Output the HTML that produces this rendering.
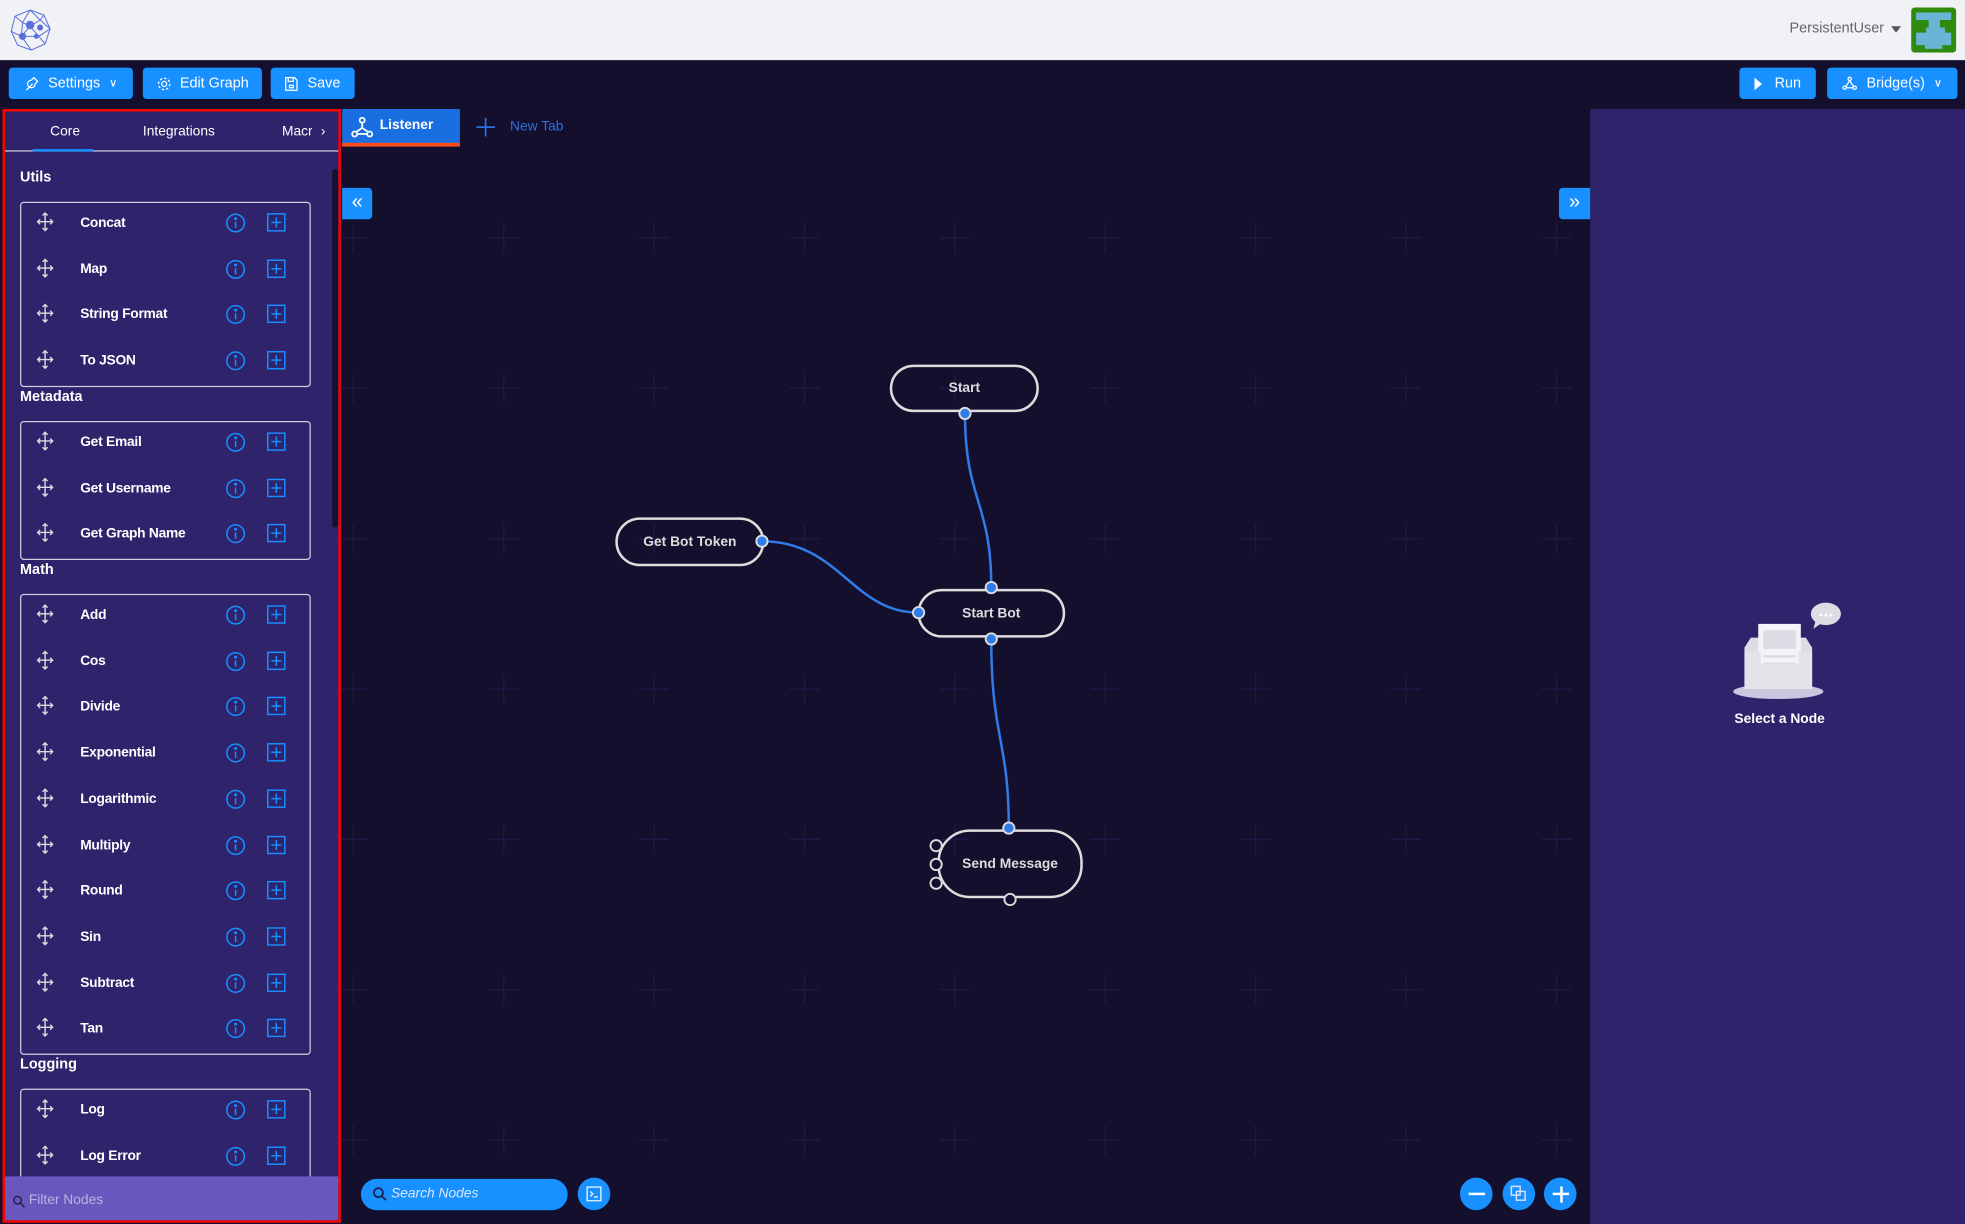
<!DOCTYPE html>
<html><head><meta charset="utf-8">
<style>
*{box-sizing:border-box;margin:0;padding:0}
html,body{width:1965px;height:1224px;overflow:hidden;background:#130f2c;font-family:"Liberation Sans",Arial,sans-serif}
#w{position:absolute;left:0;top:0;width:1568px;height:977px;transform:scale(1.25319,1.2528);transform-origin:0 0;background:#130f2c}
.a{position:absolute}
.hdr{left:0;top:0;width:1568px;height:48px;background:#f1f2f6}
.btn{position:absolute;top:54px;height:25px;background:#1890ff;border-radius:3px;color:#fff;font-size:11.5px;display:flex;align-items:center;justify-content:center;gap:7px}
.lp{left:2px;top:87px;width:270px;height:889px;background:#2f236b;border:2px solid #f00;overflow:hidden}
.tab{position:absolute;top:10px;color:#fff;font-size:11px}
.sec{position:absolute;left:12px;color:#fff;font-size:11.5px;font-weight:bold}
.box{position:absolute;left:12px;width:232px;border:1px solid #cfcfe0;border-radius:3px}
.row{position:absolute;left:0;width:232px;height:20px}
.row .t{position:absolute;left:47px;top:3px;color:#fff;font-size:11px;font-weight:bold;letter-spacing:-0.2px}
.row svg{position:absolute;top:0}
.node{position:absolute;border:2px solid #ddd;border-radius:22px;color:#ddd;font-size:11px;display:flex;align-items:center;justify-content:center;font-weight:bold}
.zb{position:absolute;top:940px;width:26px;height:26px;border-radius:50%;background:#1890ff}
</style></head><body><div id="w">
<div class="a hdr">
 <svg class="a" style="left:8px;top:7px" width="33" height="34" viewBox="0 0 33 34" fill="none" stroke="#5b6fd8" stroke-width="0.8">
  <polygon points="16,1 27,5 32,16 28,28 17,33 6,29 1,18 4,6"/>
  <path d="M16,1 L10,11 L4,6 M10,11 L16,14 L24,9 L27,5 M24,9 L32,16 M16,14 L9,22 L1,18 M9,22 L17,33 M16,14 L23,22 L28,28 M23,22 L32,16 M9,22 L23,22 M10,11 L9,22 M16,1 L24,9"/>
  <circle cx="16" cy="13" r="3" fill="#5b6fd8"/><circle cx="24" cy="15" r="2" fill="#5b6fd8"/><circle cx="10" cy="22" r="2.5" fill="#5b6fd8"/><circle cx="21" cy="22" r="1.6" fill="#5b6fd8"/>
 </svg>
 <div class="a" style="left:1428px;top:17px;color:#666;font-size:11.5px">PersistentUser</div>
 <div class="a" style="left:1509px;top:21px;width:0;height:0;border-left:4.5px solid transparent;border-right:4.5px solid transparent;border-top:5px solid #555"></div>
 <svg class="a" style="left:1525px;top:6px" width="36" height="36" viewBox="0 0 36 36"><rect width="36" height="36" rx="3" fill="#2e8b0e"/><path d="M4,4H32V10H23V16H27V20H32V30H4V20H12V16H14V10H4Z" fill="#6ab4d6"/><rect x="11" y="30" width="14" height="3" fill="#6ab4d6"/></svg>
</div>

<div class="btn" style="left:7px;width:99px"><svg width="12" height="12" viewBox="0 0 12 12" fill="none" stroke="#fff" stroke-width="1"><path d="M2,11 L7,6 M6,3 A3,3 0 1 0 9,6 L11,4 L8,1 Z"/></svg>Settings<span style="font-size:9px">&#8744;</span></div>
<div class="btn" style="left:114px;width:95px"><svg width="12" height="12" viewBox="0 0 12 12" fill="none" stroke="#fff" stroke-width="1"><circle cx="6" cy="6" r="2"/><circle cx="6" cy="6" r="4.5" stroke-dasharray="2 1.5"/></svg>Edit Graph</div>
<div class="btn" style="left:216px;width:67px"><svg width="11" height="12" viewBox="0 0 11 12" fill="none" stroke="#fff" stroke-width="1"><path d="M1,1H8L10,3V11H1Z M3,1V4H7V1 M4,7H7V9H4Z"/></svg>Save</div>
<div class="btn" style="left:1388px;width:61px"><span style="width:0;height:0;border-top:5px solid transparent;border-bottom:5px solid transparent;border-left:6px solid #fff"></span>&nbsp;Run</div>
<div class="btn" style="left:1458px;width:104px"><svg width="12" height="11" viewBox="0 0 12 11" fill="none" stroke="#fff" stroke-width="1"><circle cx="6" cy="2" r="1.3"/><circle cx="2" cy="9" r="1.3"/><circle cx="10" cy="9" r="1.3"/><path d="M6,3.3L3,8 M6,3.3L9,8 M3.3,9H8.7"/></svg>Bridge(s)<span style="font-size:9px">&#8744;</span></div>

<svg class="a" style="left:272px;top:117px" width="997" height="860">
 <g stroke="#1f1a48" stroke-width="1" fill="none">
  <path id="r" d="M0,73h22M10,61v24 M118,73h24M130,61v24 M238,73h24M250,61v24 M358,73h24M370,61v24 M478,73h24M490,61v24 M598,73h24M610,61v24 M718,73h24M730,61v24 M838,73h24M850,61v24 M958,73h24M970,61v24"/>
  <use href="#r" y="120"/><use href="#r" y="240"/><use href="#r" y="360"/><use href="#r" y="480"/><use href="#r" y="600"/><use href="#r" y="720"/>
 </g>
</svg>

<div class="a" style="left:273px;top:87px;width:94px;height:30px;background:#1a6fe0;border-bottom:3px solid #ff4a1a;color:#fff;font-size:11px;font-weight:bold">
 <svg class="a" style="left:7px;top:6px" width="18" height="17" viewBox="0 0 18 17" fill="none" stroke="#fff" stroke-width="1.4"><circle cx="9" cy="3" r="2"/><circle cx="3" cy="14" r="2"/><circle cx="15" cy="14" r="2"/><path d="M9,5V9M9,9L4,12.5M9,9L14,12.5M5,14H13"/></svg>
 <span class="a" style="left:30px;top:7px">Listener</span></div>
<svg class="a" style="left:380px;top:94px" width="15" height="15"><path d="M7.5,0V15M0,7.5H15" stroke="#2f6fe0" stroke-width="1.4"/></svg>
<div class="a" style="left:407px;top:95px;color:#2f6fe0;font-size:11px">New Tab</div>

<div class="a" style="left:273px;top:150px;width:24px;height:25px;background:#1890ff;border-radius:0 3px 3px 0;color:#fff;font-size:16px;text-align:center;line-height:24px">&#171;</div>
<div class="a" style="left:1244px;top:150px;width:25px;height:25px;background:#1890ff;border-radius:3px 0 0 3px;color:#fff;font-size:16px;text-align:center;line-height:24px">&#187;</div>

<svg class="a" style="left:0;top:0" width="1568" height="977" fill="none">
 <path d="M770,330 C770,400 791,400 791,469" stroke="#2f7be8" stroke-width="2"/>
 <path d="M608,432 C670,432 680,489 733,489" stroke="#2f7be8" stroke-width="2"/>
 <path d="M791,510 C791,590 805,590 805,661" stroke="#2f7be8" stroke-width="2"/>
</svg>
<div class="node" style="left:710px;top:291px;width:119px;height:38px">Start</div>
<div class="node" style="left:491px;top:413px;width:119px;height:39px">Get Bot Token</div>
<div class="node" style="left:732px;top:470px;width:118px;height:39px">Start Bot</div>
<div class="node" style="left:748px;top:662px;width:116px;height:55px;border-radius:26px">Send Message</div>
<svg class="a" style="left:0;top:0" width="1568" height="977" stroke="#ddd" stroke-width="1.5">
 <g fill="#2f7be8"><circle cx="770" cy="330" r="4.5"/><circle cx="608" cy="432" r="4.5"/><circle cx="791" cy="469" r="4.5"/><circle cx="733" cy="489" r="4.5"/><circle cx="791" cy="510" r="4.5"/><circle cx="805" cy="661" r="4.5"/></g>
 <g fill="#130f2c"><circle cx="747" cy="675" r="4.5"/><circle cx="747" cy="690" r="4.5"/><circle cx="747" cy="705" r="4.5"/><circle cx="806" cy="718" r="4.5"/></g>
</svg>

<div class="a" style="left:1269px;top:87px;width:299px;height:890px;background:#2f236b">
 <svg class="a" style="left:114px;top:393px" width="90" height="82" viewBox="0 0 90 82">
  <ellipse cx="36" cy="72" rx="36" ry="6" fill="#c9c6e0"/>
  <path d="M9,37 L14,29 H58 L63,37 V70 H9Z" fill="#dcdde4"/>
  <rect x="20" y="18" width="34" height="44" fill="#f4f4f6"/>
  <rect x="24" y="23" width="26" height="15" fill="#dcdde4"/>
  <rect x="24" y="43" width="26" height="2" fill="#dcdde4"/><rect x="24" y="49" width="26" height="2" fill="#dcdde4"/>
  <path d="M9,40 H22 V50 H52 V40 H63 V70 H9Z" fill="#e3e4ea"/>
  <ellipse cx="74" cy="10" rx="12" ry="9" fill="#dcdde4"/><path d="M66,15 L64,22 L71,17Z" fill="#dcdde4"/>
  <circle cx="70" cy="11" r="1.2" fill="#fff"/><circle cx="74" cy="11" r="1.2" fill="#fff"/><circle cx="78" cy="11" r="1.2" fill="#fff"/>
 </svg>
 <div class="a" style="left:115px;top:481px;color:#fff;font-size:11px;font-weight:bold">Select a Node</div>
</div>

<div class="a" style="left:288px;top:941px;width:165px;height:25px;border-radius:13px;background:#1890ff"></div>
<svg class="a" style="left:297px;top:947px" width="12" height="12" fill="none" stroke="#1a2350" stroke-width="1.4"><circle cx="5" cy="5" r="3.6"/><path d="M7.5,7.5L11,11"/></svg>
<div class="a" style="left:312px;top:947px;color:#d6e8ff;font-size:11px;font-style:italic">Search Nodes</div>
<div class="zb" style="left:461px"></div>
<svg class="a" style="left:468px;top:947px" width="12" height="12" fill="none" stroke="#fff" stroke-width="1"><rect x="0.5" y="0.5" width="11" height="11"/><path d="M3,4L5,6L3,8M6,8.5H9"/></svg>
<div class="zb" style="left:1165px"></div><div class="a" style="left:1172px;top:952px;width:13px;height:2px;background:#fff"></div>
<div class="zb" style="left:1199px"></div>
<svg class="a" style="left:1205px;top:946px" width="14" height="14" fill="none" stroke="#cfe2ff" stroke-width="1.2"><rect x="1" y="1" width="7" height="7"/><rect x="5" y="5" width="7" height="7"/></svg>
<div class="zb" style="left:1232px"></div><div class="a" style="left:1239px;top:952px;width:13px;height:2px;background:#fff"></div><div class="a" style="left:1244.5px;top:946.5px;width:2px;height:13px;background:#fff"></div>

<div class="a lp">
 <div class="tab" style="left:36px">Core</div>
 <div class="tab" style="left:110px">Integrations</div>
 <div class="tab" style="left:221px;width:24px;overflow:hidden">Macros</div>
 <div class="tab" style="left:252px">&#8250;</div>
 <div class="a" style="left:0;top:31px;width:266px;height:1px;background:#cfcfe0"></div>
 <div class="a" style="left:22px;top:30px;width:48px;height:2px;background:#1890ff"></div>
 <div class="a" style="left:261px;top:46px;width:5px;height:286px;background:#15112e;border-radius:3px"></div>
 <div id="list"></div>
 <div class="a" style="left:0;top:850px;width:266px;height:36px;background:#6a57be"></div>
 <svg class="a" style="left:6px;top:865px" width="10" height="10" fill="none" stroke="#1a2350" stroke-width="1.2"><circle cx="4" cy="4" r="3"/><path d="M6,6L9.5,9.5"/></svg>
 <div class="a" style="left:19px;top:863px;color:#bbb3e0;font-size:11px">Filter Nodes</div>
</div>
</div>
<script>
var secs=[["Utils",47,72,["Concat","Map","String Format","To JSON"]],["Metadata",222,247,["Get Email","Get Username","Get Graph Name"]],["Math",360,385,["Add","Cos","Divide","Exponential","Logarithmic","Multiply","Round","Sin","Subtract","Tan"]],["Logging",755,780,["Log","Log Error","Log Warning"]]];
var h="",R=36.7;
var mv='<svg style="left:12px" width="14" height="16" viewBox="0 0 14 16" fill="none" stroke="#ddd" stroke-width="1.1"><path d="M7,1V15M1,8H13M5,3L7,1L9,3M5,13L7,15L9,13M3,6L1,8L3,10M11,6L13,8L11,10"/></svg>';
var inf='<svg style="left:163px;top:1px" width="16" height="16" fill="none" stroke="#1890ff" stroke-width="1.2"><circle cx="8" cy="8" r="7"/><path d="M8,7V12"/><circle cx="8" cy="4.5" r="0.6" fill="#1890ff"/></svg>';
var pl='<svg style="left:196px;top:1px" width="15" height="15" fill="none" stroke="#1890ff" stroke-width="1.2"><rect x="0.7" y="0.7" width="13.6" height="13.6"/><path d="M7.5,3.5V11.5M3.5,7.5H11.5"/></svg>';
secs.forEach(function(s){
 h+='<div class="sec" style="top:'+s[1]+'px">'+s[0]+'</div>';
 var n=s[3].length,bh=n*R+1;
 h+='<div class="box" style="top:'+s[2]+'px;height:'+bh+'px">';
 s[3].forEach(function(t,i){h+='<div class="row" style="top:'+(7+i*R)+'px">'+mv+'<span class="t">'+t+'</span>'+inf+pl+'</div>';});
 h+='</div>';
});
document.getElementById('list').innerHTML=h;
</script>
</body></html>
